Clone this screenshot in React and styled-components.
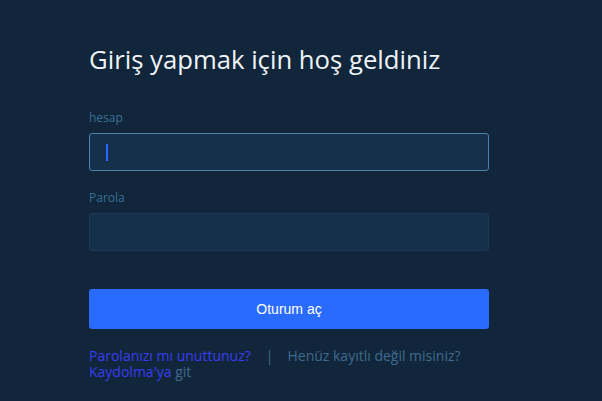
import React from "react";
import styled, { createGlobalStyle } from "styled-components";

const Global = createGlobalStyle`
  html, body { margin: 0; padding: 0; background: #11263a; }
  body { font-family: "Open Sans", "Noto Sans", sans-serif; }
  * { box-sizing: border-box; }
`;

const Page = styled.div`
  width: 602px;
  height: 401px;
  background: #11263a;
  padding: 41px 0 0 89px;
  overflow: hidden;
`;

const Form = styled.div`
  width: 400px;
  display: flex;
  flex-direction: column;
`;

const Title = styled.h1`
  margin: 0 0 31px 0;
  font-size: 25.7px;
  font-weight: 400;
  line-height: 38px;
  color: #eef3f8;
`;

const Label = styled.label`
  display: block;
  font-size: 12px;
  line-height: 16px;
  color: #3a6f96;
  margin-bottom: 7px;
`;

const Field = styled.div`
  position: relative;
  margin-bottom: ${(p) => p.$mb}px;
`;

const Input = styled.div`
  height: 38px;
  border-radius: 3px;
  background: #15304a;
  border: 1px solid ${(p) => (p.$focused ? "#4d82ab" : "#1d3a55")};
`;

const Caret = styled.span`
  position: absolute;
  left: 17px;
  top: 11px;
  width: 2px;
  height: 17px;
  background: #2c68ff;
`;

const Button = styled.button`
  margin-top: 38px;
  height: 40px;
  width: 400px;
  border: none;
  border-radius: 3px;
  background: #2a6bff;
  color: #ffffff;
  font-family: "Liberation Sans", Arial, sans-serif;
  font-size: 14px;
  cursor: pointer;
`;

const Links = styled.p`
  margin: 19px 0 0 0;
  font-size: 14px;
  line-height: 16px;
  color: #3f6a8e;
`;

const Link = styled.a`
  color: #3a3cf2;
  text-decoration: none;
`;

const Sep = styled.span`
  color: #3f6a8e;
  margin: 0 14px 0 15px;
`;

export default function App() {
  return (
    <>
      <Global />
      <Page>
        <Form>
          <Title>Giriş yapmak için hoş geldiniz</Title>
          <Label>hesap</Label>
          <Field $mb={19}>
            <Input $focused />
            <Caret />
          </Field>
          <Label>Parola</Label>
          <Field $mb={0}>
            <Input />
          </Field>
          <Button>Oturum aç</Button>
          <Links>
            <Link href="#">Parolanızı mı unuttunuz?</Link>
            <Sep>|</Sep>
            Henüz kayıtlı değil misiniz? <Link href="#">Kaydolma'ya</Link> git
          </Links>
        </Form>
      </Page>
    </>
  );
}
